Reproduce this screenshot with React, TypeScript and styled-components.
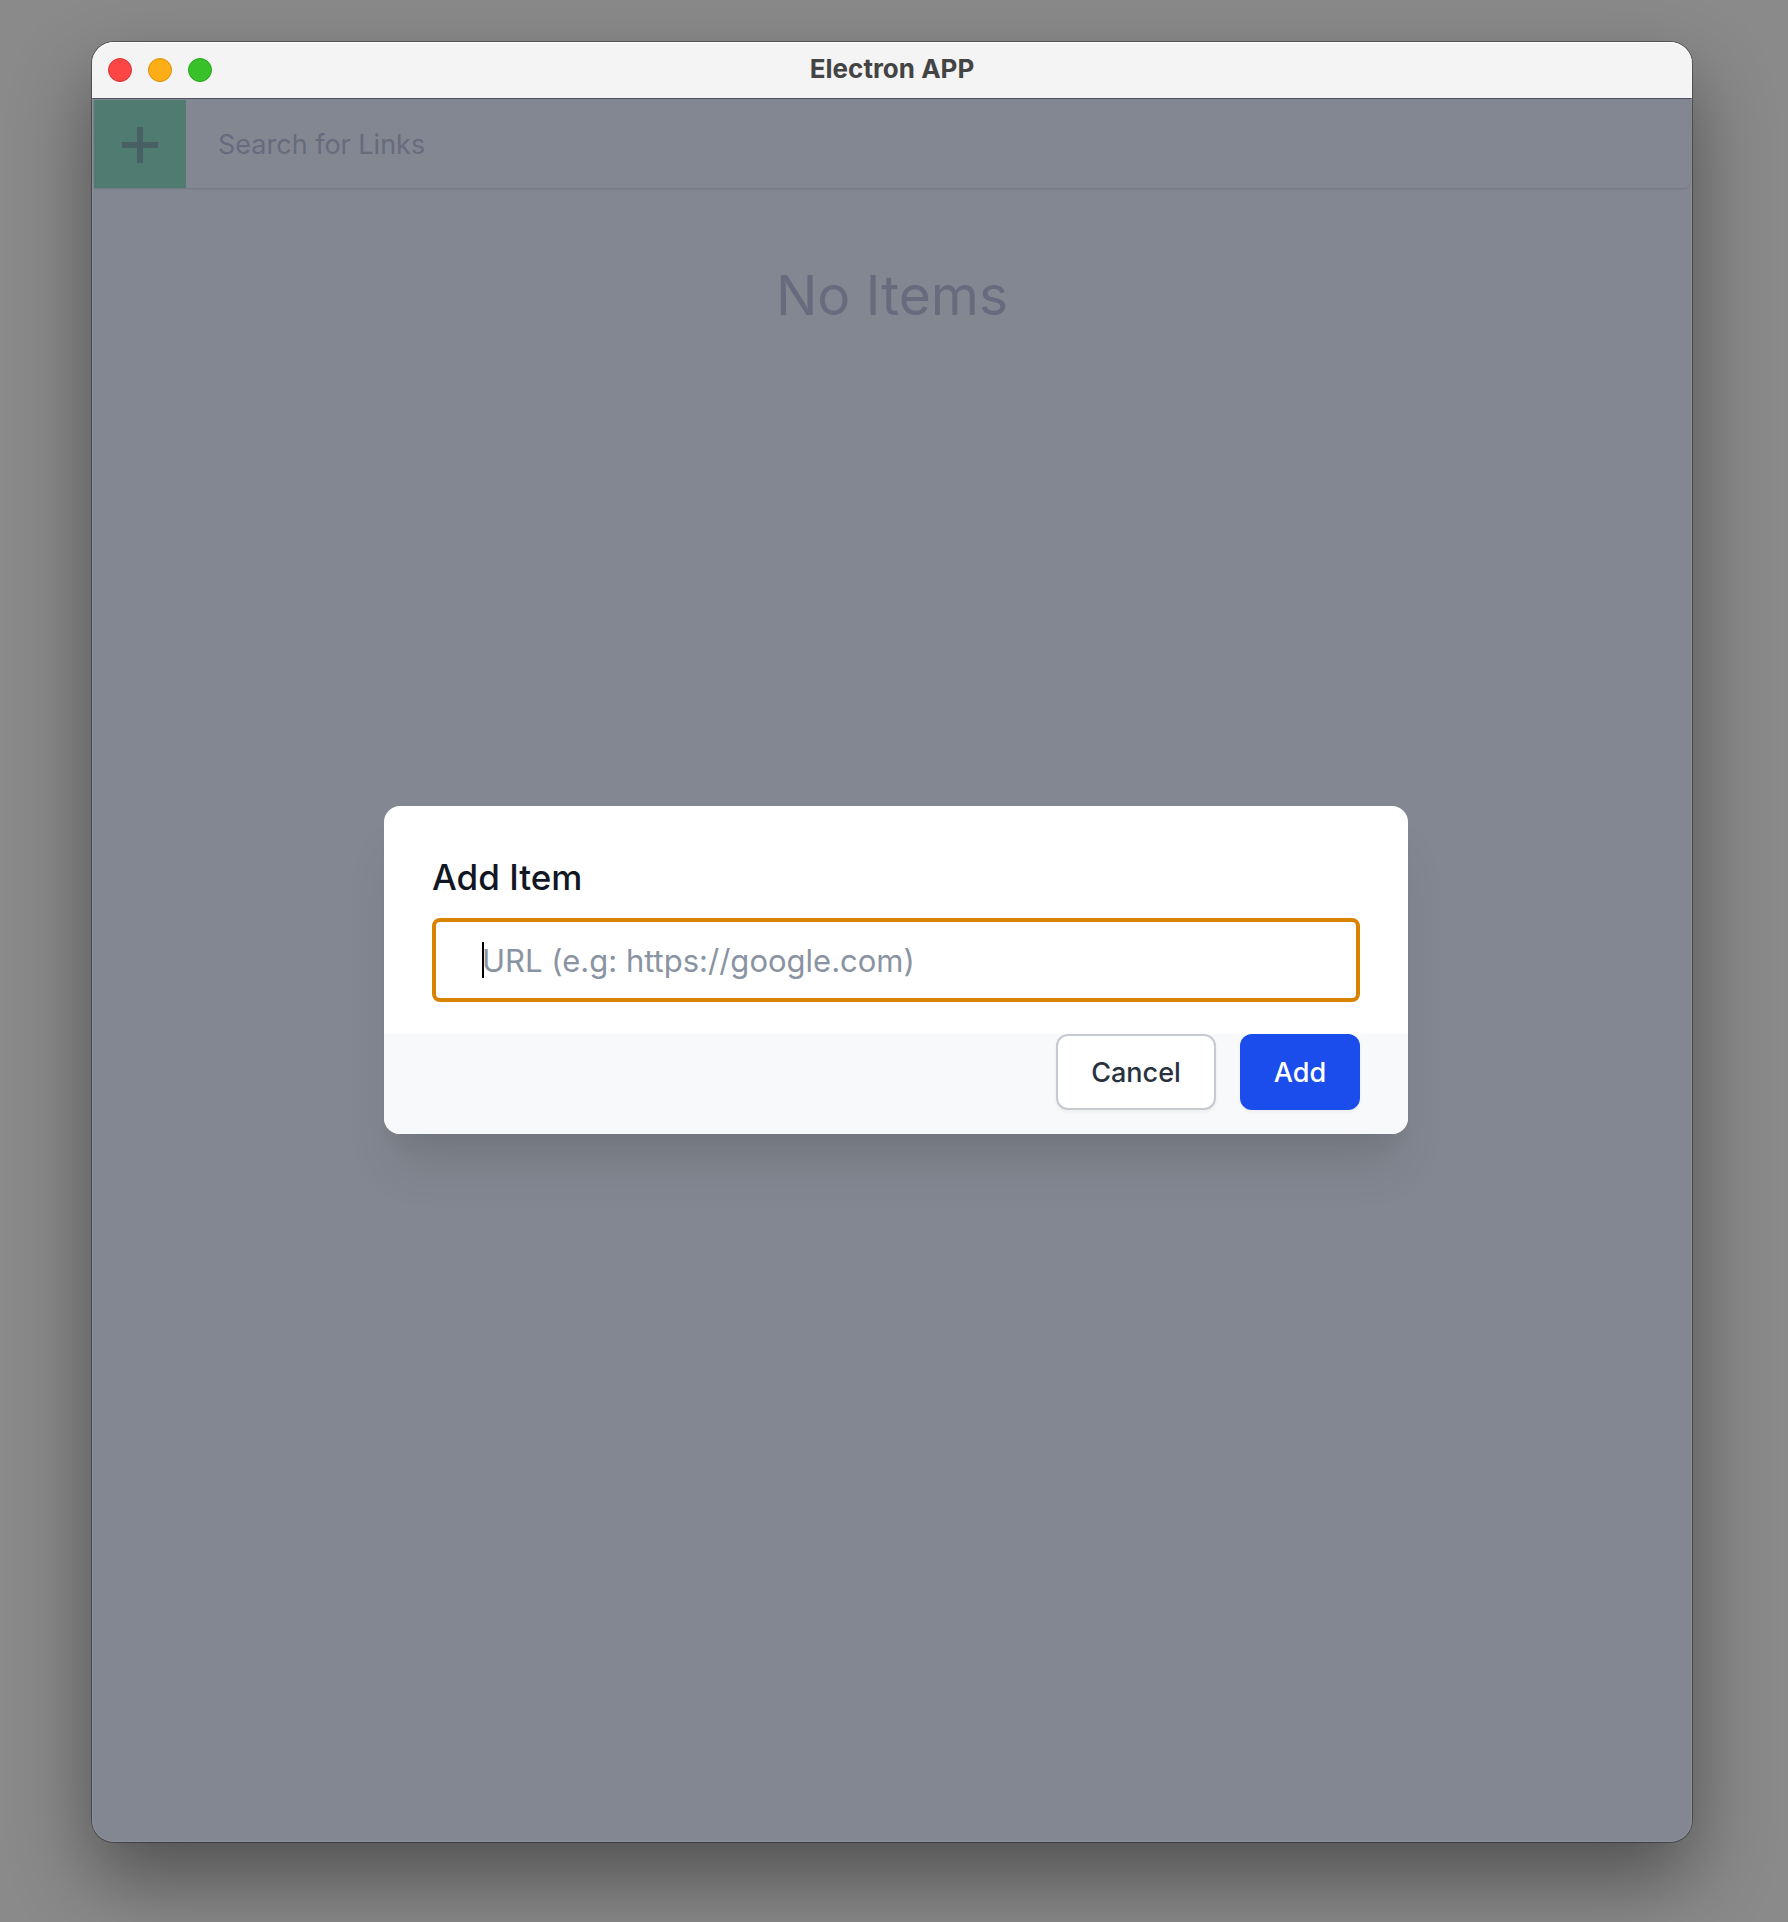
import React, { useState } from "react";
import styled, { createGlobalStyle } from "styled-components";

const GlobalStyle = createGlobalStyle`
  *, *::before, *::after { box-sizing: border-box; }
  body {
    margin: 0;
    background: #8a8a8a;
    font-family: Inter, "Liberation Sans", sans-serif;
  }
  button, input { font-family: inherit; }
`;

const Desktop = styled.div`
  display: flex;
  min-height: 100vh;
  padding: 42px 96px 80px 92px;
  overflow: hidden;
`;

const Window = styled.div`
  flex: 1;
  display: flex;
  flex-direction: column;
  border-radius: 22px;
  background: #838791;
  box-shadow: 0 0 0 1px rgba(0, 0, 0, 0.35), 0 36px 80px rgba(0, 0, 0, 0.42);
`;

const TitleBar = styled.header`
  display: grid;
  grid-template-columns: 1fr auto 1fr;
  align-items: center;
  height: 56px;
  padding: 0 16px;
  border-radius: 22px 22px 0 0;
  background: #f4f4f4;
  box-shadow: inset 0 1px 0 #ffffff;
`;

const Lights = styled.div`
  display: flex;
  gap: 16px;
`;

const Light = styled.button<{ $fill: string; $edge: string }>`
  width: 24px;
  height: 24px;
  padding: 0;
  border: 1px solid ${(p) => p.$edge};
  border-radius: 50%;
  background: ${(p) => p.$fill};
`;

const Title = styled.h1`
  margin: 0;
  padding-bottom: 2px;
  font-size: 26px;
  line-height: 32px;
  font-weight: 700;
  color: #444444;
`;

const Content = styled.main`
  position: relative;
  flex: 1;
  display: flex;
  flex-direction: column;
  padding: 1px;
  border: 1px solid #8e919b;
  border-top-color: #4d5162;
  border-radius: 0 0 22px 22px;
`;

const Toolbar = styled.div`
  display: flex;
  height: 88px;
  border-radius: 0 6px 6px 0;
  box-shadow: 0 1px 2px 0 #747883;
`;

const NewButton = styled.button`
  display: flex;
  align-items: center;
  justify-content: center;
  width: 92px;
  padding: 2px 0 0;
  border: 0;
  background: #4f7b71;
  color: #485f63;
`;

const SearchInput = styled.input`
  flex: 1;
  min-width: 0;
  padding: 0 32px;
  border: 0;
  border-radius: 0 6px 6px 0;
  outline: none;
  background: #838791;
  color: #676b7e;
  font-size: 27px;

  &::placeholder {
    color: #676b7e;
    opacity: 1;
  }
`;

const EmptyMessage = styled.p`
  margin: 72px 0 0;
  text-align: center;
  font-size: 55px;
  line-height: 70px;
  color: #676b7e;
`;

const Overlay = styled.div`
  position: absolute;
  inset: 0;
  display: flex;
  align-items: center;
  justify-content: center;
  padding-left: 8px;
`;

const Dialog = styled.form`
  width: 100%;
  max-width: 1024px;
  border-radius: 16px;
  overflow: hidden;
  background: #ffffff;
  box-shadow: 0 40px 50px -10px rgba(0, 0, 0, 0.1),
    0 20px 20px -10px rgba(0, 0, 0, 0.04);
`;

const DialogBody = styled.div`
  display: flex;
  flex-direction: column;
  gap: 18px;
  padding: 48px 48px 32px;
`;

const DialogTitle = styled.label`
  font-size: 35px;
  line-height: 46px;
  font-weight: 500;
  color: #111624;
`;

const Field = styled.div`
  position: relative;
  display: flex;
`;

const UrlInput = styled.input`
  flex: 1;
  min-width: 0;
  height: 84px;
  padding: 0 46px;
  border: 4px solid #d98200;
  border-radius: 8px;
  outline: none;
  background: #ffffff;
  color: #111624;
  caret-color: transparent;
  font-size: 31px;

  &::placeholder {
    color: #8a93a2;
    opacity: 1;
  }
`;

const Caret = styled.span`
  position: absolute;
  left: 50px;
  top: 24px;
  width: 2px;
  height: 36px;
  background: #000000;
`;

const DialogFooter = styled.footer`
  display: flex;
  justify-content: flex-end;
  gap: 24px;
  padding: 0 48px 24px;
  background: #f8f9fb;
`;

const ActionButton = styled.button<{ $primary?: boolean }>`
  min-width: ${(p) => (p.$primary ? 120 : 160)}px;
  height: 76px;
  padding: 0;
  border: 2px solid ${(p) => (p.$primary ? "#1a4deb" : "#c6cad1")};
  border-radius: 12px;
  background: ${(p) => (p.$primary ? "#1a4deb" : "#ffffff")};
  color: ${(p) => (p.$primary ? "#ffffff" : "#28323f")};
  font-size: 27px;
  font-weight: 500;
  box-shadow: 0 2px 4px rgba(0, 0, 0, 0.05);
`;

const lights = [
  { name: "Close", fill: "#fc4645", edge: "#d93437" },
  { name: "Minimize", fill: "#fdae17", edge: "#d8920f" },
  { name: "Zoom", fill: "#38c128", edge: "#2ba61d" },
];

export default function App() {
  const [query, setQuery] = useState("");
  const [url, setUrl] = useState("");

  return (
    <>
      <GlobalStyle />
      <Desktop>
        <Window>
          <TitleBar>
            <Lights>
              {lights.map((l) => (
                <Light
                  key={l.name}
                  type="button"
                  aria-label={l.name}
                  $fill={l.fill}
                  $edge={l.edge}
                />
              ))}
            </Lights>
            <Title>Electron APP</Title>
          </TitleBar>
          <Content>
            <Toolbar>
              <NewButton type="button" aria-label="New item">
                <svg width="36" height="36" viewBox="0 0 36 36" aria-hidden="true">
                  <path d="M18 0V36M0 18H36" stroke="currentColor" strokeWidth="6" />
                </svg>
              </NewButton>
              <SearchInput
                type="text"
                aria-label="Search for Links"
                placeholder="Search for Links"
                value={query}
                onChange={(e) => setQuery(e.target.value)}
              />
            </Toolbar>
            <EmptyMessage>No Items</EmptyMessage>
            <Overlay>
              <Dialog
                role="dialog"
                aria-modal="true"
                onSubmit={(e) => e.preventDefault()}
              >
                <DialogBody>
                  <DialogTitle htmlFor="item-url">Add Item</DialogTitle>
                  <Field>
                    <UrlInput
                      id="item-url"
                      type="text"
                      autoFocus
                      placeholder="URL (e.g: https://google.com)"
                      value={url}
                      onChange={(e) => setUrl(e.target.value)}
                    />
                    {url === "" && <Caret />}
                  </Field>
                </DialogBody>
                <DialogFooter>
                  <ActionButton type="button">Cancel</ActionButton>
                  <ActionButton type="submit" $primary>
                    Add
                  </ActionButton>
                </DialogFooter>
              </Dialog>
            </Overlay>
          </Content>
        </Window>
      </Desktop>
    </>
  );
}
